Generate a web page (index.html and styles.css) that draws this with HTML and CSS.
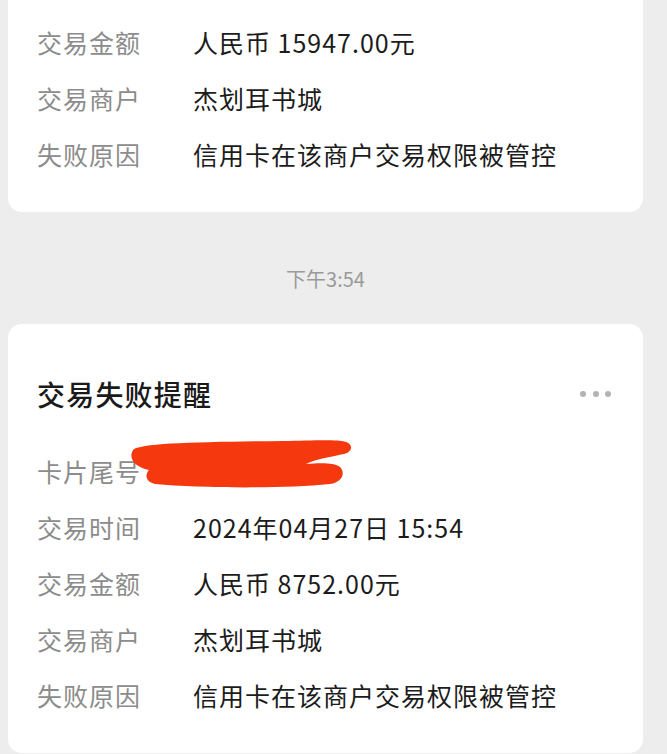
FILE: index.html
```html
<!DOCTYPE html>
<html lang="zh-CN">
<head>
<meta charset="utf-8">
<title>交易失败提醒</title>
<link rel="stylesheet" href="styles.css">
</head>
<body>
<div class="feed">
  <section class="card card-prev">
    <div class="rows">
      <div class="row"><span class="label">交易时间</span><span class="value">2024年04月27日 15:52</span></div>
      <div class="row"><span class="label">交易金额</span><span class="value">人民币 15947.00元</span></div>
      <div class="row"><span class="label">交易商户</span><span class="value">杰划耳书城</span></div>
      <div class="row"><span class="label">失败原因</span><span class="value">信用卡在该商户交易权限被管控</span></div>
    </div>
  </section>

  <div class="time">下午3:54</div>

  <section class="card">
    <div class="card-head">
      <h2 class="card-title">交易失败提醒</h2>
      <div class="more"><span></span><span></span><span></span></div>
    </div>
    <div class="rows">
      <div class="row row-card">
        <span class="label">卡片尾号</span><span class="value"></span>
        <svg class="scribble" viewBox="128 436 226 56" width="226" height="56" aria-hidden="true">
          <path d="M133 449 C140 442 200 441 283 440 C310 440 335 438 346 441 C354 444 352 451 344 453 C330 456 316 458 306 463 C318 462 334 461 340 466 C346 472 342 481 330 483 C280 488 200 487 155 483 C145 481 145 473 149 469 C139 467 127 460 133 449 Z" fill="#f5380d"/>
        </svg>
      </div>
      <div class="row"><span class="label">交易时间</span><span class="value">2024年04月27日 15:54</span></div>
      <div class="row"><span class="label">交易金额</span><span class="value">人民币 8752.00元</span></div>
      <div class="row"><span class="label">交易商户</span><span class="value">杰划耳书城</span></div>
      <div class="row"><span class="label">失败原因</span><span class="value">信用卡在该商户交易权限被管控</span></div>
    </div>
  </section>
</div>
</body>
</html>
```

FILE: styles.css
```css
html, body {
  margin: 0;
  padding: 0;
  background: #ededed;
}
body {
  font-family: "Noto Sans CJK SC", "Noto Sans", sans-serif;
  overflow: hidden;
  height: 754px;
}
.feed {
  display: flex;
  flex-direction: column;
}
.card {
  background: #ffffff;
  margin: 0 24px 0 8px;
  border-radius: 14px;
  padding: 50px 32px 30px 29px;
}
.card-prev {
  margin-top: -42px;
  padding-top: 0;
  border-top-left-radius: 0;
  border-top-right-radius: 0;
}
.card-prev .rows {
  margin-top: 0;
}
.card-head {
  display: flex;
  align-items: center;
  justify-content: space-between;
  height: 40px;
}
.card-title {
  margin: 0;
  font-size: 28px;
  font-weight: 500;
  color: #1a1a1a;
  line-height: 40px;
  letter-spacing: 1.2px;
}
.more {
  display: flex;
  gap: 6.5px;
  align-items: center;
}
.more span {
  width: 6px;
  height: 6px;
  border-radius: 50%;
  background: #b3b3b3;
}
.rows {
  margin-top: 29px;
  display: flex;
  flex-direction: column;
}
.row {
  position: relative;
  height: 56px;
  display: flex;
  align-items: center;
  font-size: 25px;
  line-height: 32px;
}
.label {
  width: 156px;
  flex: none;
  color: #8c8c8c;
  letter-spacing: 1px;
}
.value {
  color: #1c1c1c;
  letter-spacing: 1px;
}
.scribble {
  position: absolute;
  left: 91px;
  top: -6px;
}
.time {
  margin: 55px 0 33px;
  height: 24px;
  line-height: 24px;
  text-align: center;
  font-size: 20px;
  color: #9a9a9a;
  padding-right: 16px;
}
```
